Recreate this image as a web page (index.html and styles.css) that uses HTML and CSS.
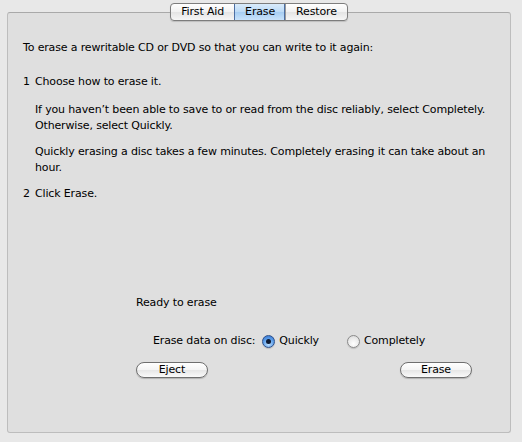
FILE: index.html
```html
<!DOCTYPE html>
<html lang="en">
<head>
  <meta charset="UTF-8">
  <meta name="viewport" content="width=device-width, initial-scale=1.0">
  <title>Disk Utility - Erase</title>
  <link rel="stylesheet" href="styles.css">
</head>
<body>
  <div class="tab-view">
    <!-- Segmented tab switcher -->
    <div class="tabs">
      <div class="tab">First Aid</div>
      <div class="tab selected">Erase</div>
      <div class="tab">Restore</div>
    </div>

    <div class="panel">
      <div class="instructions">
        <p class="intro">To erase a rewritable CD or DVD so that you can write to it again:</p>

        <div class="step">
          <span class="step-num">1</span>
          <div class="step-body">
            <p class="step-title">Choose how to erase it.</p>
            <p>If you haven’t been able to save to or read from the disc reliably, select Completely. Otherwise, select Quickly.</p>
            <p>Quickly erasing a disc takes a few minutes. Completely erasing it can take about an hour.</p>
          </div>
        </div>

        <div class="step">
          <span class="step-num">2</span>
          <div class="step-body">
            <p class="step-title">Click Erase.</p>
          </div>
        </div>
      </div>

      <div class="erase-controls">
        <div class="status">Ready to erase</div>

        <div class="options">
          <span class="options-label">Erase data on disc:</span>
          <label class="radio">
            <span class="radio-dot checked"></span>
            Quickly
          </label>
          <label class="radio">
            <span class="radio-dot"></span>
            Completely
          </label>
        </div>

        <div class="buttons">
          <button class="pill-button">Eject</button>
          <button class="pill-button">Erase</button>
        </div>
      </div>
    </div>
  </div>
</body>
</html>
```

FILE: styles.css
```css
:root {
  --window-bg: #e8e8e8;
  --panel-bg: #dfdfdf;
  --panel-border: #bdbdbd;
  --text-color: #000000;
}

* {
  margin: 0;
  padding: 0;
  box-sizing: border-box;
}

body {
  background-color: var(--window-bg);
  color: var(--text-color);
  font-family: "DejaVu Sans", "Lucida Grande", sans-serif;
  font-size: 11px;
  letter-spacing: -0.15px;
  line-height: 16px;
  padding: 3px 11px 9px 7px;
}

/* Tab switcher sits over the top edge of the panel */
.tab-view {
  display: flex;
  flex-direction: column;
}

.tabs {
  position: relative;
  z-index: 1;
  display: flex;
  align-self: center;
  height: 18px;
  border: 1px solid #7d7d7d;
  border-radius: 4px;
  overflow: hidden;
  background: linear-gradient(#ffffff, #f1f1f1 50%, #e4e4e4 51%, #f6f6f6);
  box-shadow: 0 1px 1px rgba(0, 0, 0, 0.15);
}

.tab {
  padding: 0 10px;
  line-height: 16px;
  text-align: center;
  border-left: 1px solid #9a9a9a;
}

.tab:first-child {
  border-left: none;
}

.tab.selected {
  background: linear-gradient(#d9ebfb, #bcdaf6 50%, #a6cdf2 51%, #c9e3fb);
  border-left-color: #4c6fa4;
  box-shadow: inset -1px 0 0 #4c6fa4;
}

.panel {
  margin-top: -9px;
  height: 421px;
  background-color: var(--panel-bg);
  border: 1px solid var(--panel-border);
  border-top-color: #a9a9a9;
  border-radius: 3px;
  padding: 27px 15px 0;
  display: flex;
  flex-direction: column;
}

.intro {
  margin-bottom: 18px;
}

.step {
  display: flex;
  margin-bottom: 10px;
}

.step-num {
  width: 12px;
  flex-shrink: 0;
}

.step-body p + p {
  margin-top: 10px;
}

.step-body .step-title + p {
  margin-top: 12px;
}

/* Bottom area with status, erase mode and buttons */
.erase-controls {
  margin-top: auto;
  margin-bottom: 54px;
  margin-left: 113px;
  width: 336px;
}

.status {
  margin-bottom: 22px;
}

.options {
  display: flex;
  align-items: center;
  padding-left: 17px;
  margin-bottom: 13px;
}

.options-label {
  margin-right: 7px;
}

.radio {
  display: flex;
  align-items: center;
  gap: 4px;
  margin-right: 28px;
}

.radio-dot {
  width: 13px;
  height: 13px;
  border-radius: 50%;
  border: 1px solid #8a8a8a;
  background: radial-gradient(circle at 50% 70%, #ffffff, #e9e9e9 60%, #cfcfcf);
  box-shadow: 0 1px 1px rgba(0, 0, 0, 0.15);
  display: flex;
  align-items: center;
  justify-content: center;
}

.radio-dot.checked {
  border-color: #2d4f8a;
  background: radial-gradient(circle at 50% 75%, #bfe0ff, #5b9de8 55%, #2d6ccc);
}

.radio-dot.checked::after {
  content: "";
  width: 5px;
  height: 5px;
  border-radius: 50%;
  background-color: #0d1a33;
}

.buttons {
  display: flex;
  justify-content: space-between;
}

.pill-button {
  width: 72px;
  height: 16px;
  border: 1px solid #6f6f6f;
  border-radius: 8px;
  background: linear-gradient(#ffffff, #f4f4f4 50%, #e6e6e6 51%, #fafafa);
  box-shadow: 0 1px 1px rgba(0, 0, 0, 0.2);
  font-family: inherit;
  font-size: 11px;
  letter-spacing: -0.15px;
  line-height: 14px;
  color: var(--text-color);
}
```
